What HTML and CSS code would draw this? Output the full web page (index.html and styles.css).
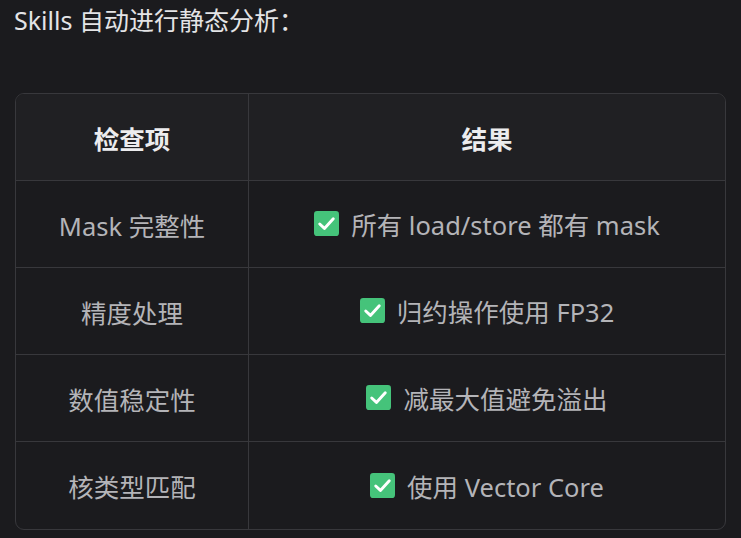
FILE: index.html
```html
<!DOCTYPE html>
<html>

<head>
  <meta charset="utf-8" />
  <title>Skills 静态分析</title>
  <link rel="stylesheet" href="styles.css">
</head>

<body>
  <p class="intro">Skills 自动进行静态分析：</p>

  <table class="result-table">
    <thead>
      <tr>
        <th class="col-item">检查项</th>
        <th>结果</th>
      </tr>
    </thead>
    <tbody>
      <tr>
        <td>Mask 完整性</td>
        <td><span class="ok"><svg class="check" viewBox="0 0 24 24"><rect width="24" height="24" rx="3" fill="#45c37a"/><path d="M5.5 12.5l4.5 4.2 8.5-9.2" fill="none" stroke="#fff" stroke-width="2.8" stroke-linecap="round" stroke-linejoin="round"/></svg>所有 load/store 都有 mask</span></td>
      </tr>
      <tr>
        <td>精度处理</td>
        <td><span class="ok"><svg class="check" viewBox="0 0 24 24"><rect width="24" height="24" rx="3" fill="#45c37a"/><path d="M5.5 12.5l4.5 4.2 8.5-9.2" fill="none" stroke="#fff" stroke-width="2.8" stroke-linecap="round" stroke-linejoin="round"/></svg>归约操作使用 FP32</span></td>
      </tr>
      <tr>
        <td>数值稳定性</td>
        <td><span class="ok"><svg class="check" viewBox="0 0 24 24"><rect width="24" height="24" rx="3" fill="#45c37a"/><path d="M5.5 12.5l4.5 4.2 8.5-9.2" fill="none" stroke="#fff" stroke-width="2.8" stroke-linecap="round" stroke-linejoin="round"/></svg>减最大值避免溢出</span></td>
      </tr>
      <tr>
        <td>核类型匹配</td>
        <td><span class="ok"><svg class="check" viewBox="0 0 24 24"><rect width="24" height="24" rx="3" fill="#45c37a"/><path d="M5.5 12.5l4.5 4.2 8.5-9.2" fill="none" stroke="#fff" stroke-width="2.8" stroke-linecap="round" stroke-linejoin="round"/></svg>使用 Vector Core</span></td>
      </tr>
    </tbody>
  </table>
</body>

</html>
```

FILE: styles.css
```css
* {
  margin: 0;
  padding: 0;
  box-sizing: border-box;
  font-family: "Noto Sans", "Noto Sans CJK SC", sans-serif;
}

html,
body {
  width: 100%;
  height: 100%;
  overflow: hidden;
  background-color: #1b1b1e;
}

body {
  padding: 3px 15px 0 15px;
}

.intro {
  font-size: 25px;
  line-height: 34px;
  color: #e4e4e6;
  margin-left: -1px;
}

.result-table {
  margin-top: 56px;
  width: 711px;
  border-collapse: separate;
  border-spacing: 0;
  border: 1px solid #38383c;
  border-radius: 9px;
  overflow: hidden;
  font-size: 25.5px;
}

.result-table th,
.result-table td {
  height: 87px;
  text-align: center;
  vertical-align: middle;
  border-bottom: 1px solid #38383c;
}

.result-table th:first-child,
.result-table td:first-child {
  border-right: 1px solid #38383c;
}

.result-table tbody tr:last-child td {
  border-bottom: none;
}

.result-table th {
  background-color: #202023;
  color: #ececee;
  font-weight: 700;
}

.result-table td {
  color: #b4b4b8;
}

.col-item {
  width: 233px;
}

.ok {
  display: inline-flex;
  align-items: center;
  gap: 12px;
}

.check {
  width: 25px;
  height: 25px;
  flex: 0 0 auto;
}
```
